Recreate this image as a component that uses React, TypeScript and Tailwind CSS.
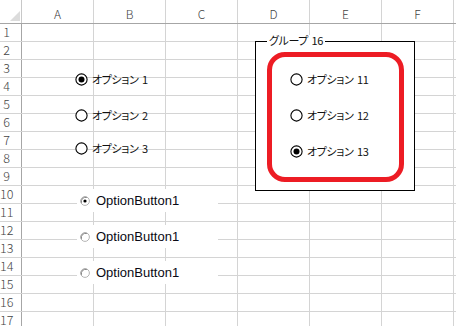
import React from "react";

const COLS = ["A", "B", "C", "D", "E", "F"];
const ROWS = Array.from({ length: 17 }, (_, i) => i + 1);

const jp =
  "font-['MS_PGothic','Noto_Sans_CJK_JP',sans-serif] [font-feature-settings:'palt'] tracking-[-0.4px] [word-spacing:1.5px]";

function FormRadio({ checked }: { checked?: boolean }) {
  return (
    <svg width="13" height="13" viewBox="0 0 13 13" className="shrink-0">
      <circle cx="6.5" cy="6.5" r="5.6" fill="white" stroke="#000" strokeWidth="1.1" />
      {checked && <circle cx="6.5" cy="6.5" r="3" fill="#000" />}
    </svg>
  );
}

function FormOption({ label, checked }: { label: string; checked?: boolean }) {
  return (
    <div className="flex h-[16px] items-center gap-[4px]">
      <FormRadio checked={checked} />
      <span className={`${jp} text-[11px] leading-none text-[#111]`}>{label}</span>
    </div>
  );
}

function ActiveXOption({ checked }: { checked?: boolean }) {
  return (
    <div className="flex h-[23px] w-[141px] items-center gap-[6px] bg-white pl-[3px]">
      <svg width="10" height="10" viewBox="0 0 10 10" className="shrink-0">
        <circle cx="5" cy="5" r="4.4" fill="white" stroke="#b4b4b4" strokeWidth="1" />
        <path d="M1.4 6.8 A4.4 4.4 0 0 1 6.8 1.4" fill="none" stroke="#7a7a7a" strokeWidth="1" />
        {checked && <circle cx="5" cy="5" r="1.6" fill="#000" />}
      </svg>
      <span className="font-['Liberation_Sans',Arial,sans-serif] text-[13px] leading-none text-[#0a0a14]">OptionButton1</span>
    </div>
  );
}

export default function App() {
  return (
    <div className="relative h-[326px] w-[456px] overflow-hidden bg-white">
      {/* column header */}
      <div className="flex h-[24px] border-b border-[#a6a6a6]">
        <div className="relative w-[22px] shrink-0 border-r border-[#c8c8c8]">
          <svg width="10" height="10" viewBox="0 0 10 10" className="absolute left-[10px] top-[11px]">
            <polygon points="10,0 10,10 0,10" fill="#dcdcdc" />
          </svg>
        </div>
        {COLS.map((c) => (
          <div
            key={c}
            className="flex w-[72px] shrink-0 items-end justify-center border-r border-[#d4d4d4] pb-[3px] font-['Noto_Sans_CJK_JP',sans-serif] text-[12px] font-light leading-none text-[#444]"
          >
            {c}
          </div>
        ))}
        <div className="flex-1" />
      </div>

      {/* rows */}
      {ROWS.map((r) => (
        <div key={r} className="flex h-[18px] border-b border-[#d4d4d4]">
          <div className="flex w-[22px] shrink-0 items-center border-r border-[#a6a6a6]">
            <span className="w-[13px] text-center font-['Noto_Sans_CJK_JP',sans-serif] text-[12.5px] font-light leading-none text-[#444]">
              {r}
            </span>
          </div>
          {COLS.map((c) => (
            <div key={c} className="w-[72px] shrink-0 border-r border-[#d4d4d4]" />
          ))}
          <div className="flex-1" />
        </div>
      ))}

      {/* form option buttons */}
      <div className="absolute left-[75px] top-[71px] flex flex-col gap-[20px]">
        <FormOption label="オプション 1" checked />
        <FormOption label="オプション 2" />
        <div className="-mt-[3px]">
          <FormOption label="オプション 3" />
        </div>
      </div>

      {/* group box */}
      <div className="absolute left-[255px] top-[41px] h-[150px] w-[160px] border border-black bg-white">
        <span className={`absolute left-[11px] top-[-7px] bg-white px-[2px] ${jp} text-[11px] leading-none text-[#111]`}>
          グループ 16
        </span>
        <div className="ml-[34px] mt-[29px] flex flex-col gap-[20px]">
          <FormOption label="オプション 11" />
          <FormOption label="オプション 12" />
          <FormOption label="オプション 13" checked />
        </div>
      </div>

      {/* annotation */}
      <div className="absolute left-[267px] top-[52px] h-[130px] w-[137px] rounded-[18px] border-[5px] border-[#ed1c24]" />

      {/* ActiveX option buttons */}
      <div className="absolute left-[77px] top-[189px] flex flex-col gap-[13px]">
        <ActiveXOption checked />
        <ActiveXOption />
        <ActiveXOption />
      </div>
    </div>
  );
}
